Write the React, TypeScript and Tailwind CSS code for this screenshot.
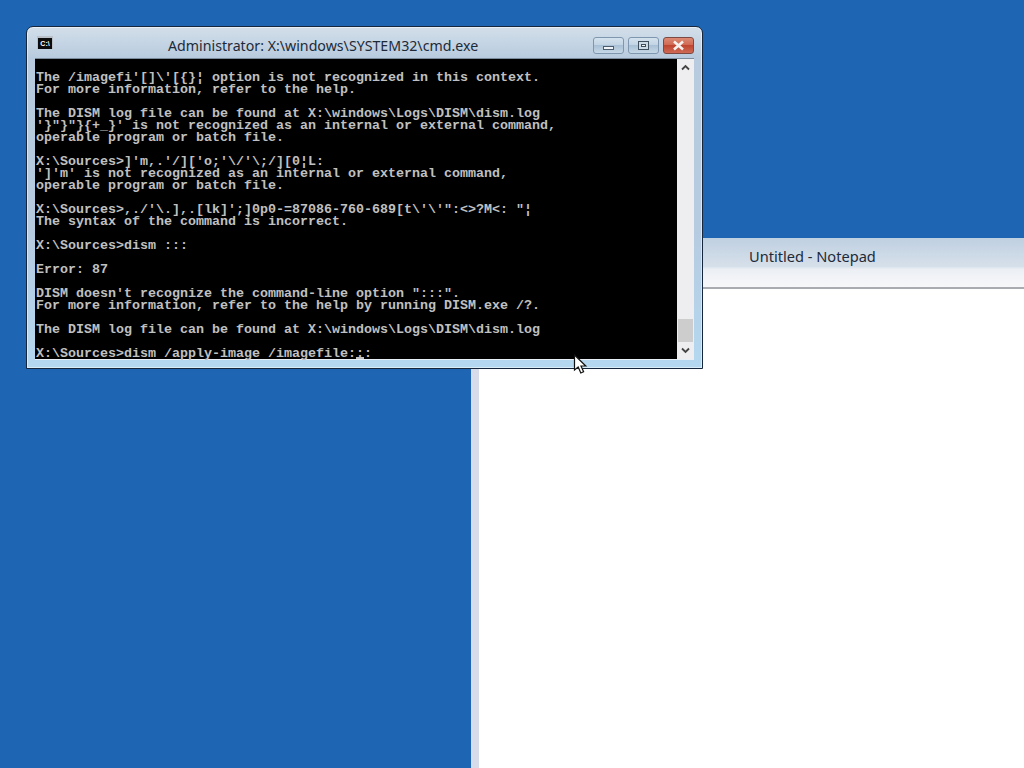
const consoleLines = [
  '',
  "The /imagefi'[]\\'[{}¦ option is not recognized in this context.",
  'For more information, refer to the help.',
  '',
  'The DISM log file can be found at X:\\windows\\Logs\\DISM\\dism.log',
  "'}\"}\"}{+_}' is not recognized as an internal or external command,",
  'operable program or batch file.',
  '',
  "X:\\Sources>]'m,.'/]['o;'\\/'\\;/][0¦L:",
  "']'m' is not recognized as an internal or external command,",
  'operable program or batch file.',
  '',
  "X:\\Sources>,./'\\.],.[lk]';]0p0-=87086-760-689[t\\'\\'\":<>?M<: \"¦",
  'The syntax of the command is incorrect.',
  '',
  'X:\\Sources>dism :::',
  '',
  'Error: 87',
  '',
  "DISM doesn't recognize the command-line option \":::\".",
  'For more information, refer to the help by running DISM.exe /?.',
  '',
  'The DISM log file can be found at X:\\windows\\Logs\\DISM\\dism.log',
  '',
  'X:\\Sources>dism /apply-image /imagefile:::',
]

function CmdIcon() {
  return (
    <div className="w-[16px] h-[13px] bg-[#0c0c0c] border-t-2 border-x border-[#b9c0c8] flex items-center justify-center overflow-hidden">
      <span className="text-[7px] leading-none font-bold text-white font-['Liberation_Sans',sans-serif]">C:\</span>
    </div>
  )
}

function WindowButtons() {
  return (
    <div className="flex gap-[4px]">
      <div className="w-[31px] h-[17px] rounded-[3px] border border-[#7f97ae] bg-[linear-gradient(to_bottom,#d5e2ee,#c3d4e4_45%,#a9c0d6_50%,#c6d8e6)] flex items-end justify-center pb-[3px]">
        <div className="w-[11px] h-[4px] bg-[#f1f5f8] border border-[#4b5d6e]" />
      </div>
      <div className="w-[31px] h-[17px] rounded-[3px] border border-[#7f97ae] bg-[linear-gradient(to_bottom,#d5e2ee,#c3d4e4_45%,#a9c0d6_50%,#c6d8e6)] flex items-center justify-center">
        <div className="w-[11px] h-[9px] border border-[#3f4f5e] bg-[#cddbe7] flex items-center justify-center">
          <div className="w-[5px] h-[3px] bg-[#f1f5f8] border border-[#3f4f5e]" />
        </div>
      </div>
      <div className="w-[31px] h-[17px] rounded-[3px] border border-[#7c4a42] bg-[linear-gradient(to_bottom,#dc8a74,#d06a55_45%,#bf4630_50%,#cf6a55)] flex items-center justify-center">
        <svg width="13" height="11" viewBox="0 0 13 11">
          <path d="M2 1.5 L11 9.5 M11 1.5 L2 9.5" stroke="#f4f1ee" strokeWidth="2.6" />
        </svg>
      </div>
    </div>
  )
}

function Scrollbar() {
  return (
    <div className="w-[17px] bg-[#eeeef0] flex flex-col items-center">
      <div className="h-[17px] flex items-center justify-center">
        <svg width="9" height="7" viewBox="0 0 9 7">
          <path d="M1 5.5 L4.5 2 L8 5.5" fill="none" stroke="#444" strokeWidth="1.8" />
        </svg>
      </div>
      <div className="flex-1 w-full" />
      <div className="w-[15px] h-[23px] bg-[#cdcdcd]" />
      <div className="h-[17px] flex items-center justify-center">
        <svg width="9" height="7" viewBox="0 0 9 7">
          <path d="M1 1.5 L4.5 5 L8 1.5" fill="none" stroke="#444" strokeWidth="1.8" />
        </svg>
      </div>
    </div>
  )
}

function CmdWindow() {
  return (
    <div className="absolute left-[26px] top-[26px] w-[677px] h-[343px] rounded-t-[7px] border border-[#16263c] bg-[linear-gradient(to_bottom,#d3dfea,#b8cbde_9%,#b6cbe0_60%,#b4d8f0)] pl-[8px] pr-[8px] pb-[8px] flex flex-col shadow-[inset_0_0_0_1px_rgba(255,255,255,0.5)]">
      <div className="h-[32px] relative flex items-center shrink-0 border-b border-[#7d8c9b]">
        <div className="ml-[2px]">
          <CmdIcon />
        </div>
        <div className="absolute left-[133px] top-[8px] text-[14.2px] text-[#1d2a38] font-['Noto_Sans',sans-serif] whitespace-nowrap">
          Administrator: X:\windows\SYSTEM32\cmd.exe
        </div>
        <div className="absolute right-[0px] top-[10px]">
          <WindowButtons />
        </div>
      </div>
      <div className="flex h-[300px] shrink-0 shadow-[0_1px_0_0_#e8eff6]">
        <div className="relative w-[642px] bg-black pl-[1px] pt-[1px] font-['Liberation_Mono',monospace] font-bold text-[13.33px] leading-[12px] text-[#c0c0c0] whitespace-pre">
          {consoleLines.map((line, idx) => (
            <div key={idx} className="h-[12px]">{line}</div>
          ))}
          <div className="absolute left-[321px] top-[298px] w-[8px] h-[2px] bg-[#c0c0c0]" />
        </div>
        <Scrollbar />
      </div>
    </div>
  )
}

function NotepadWindow() {
  return (
    <div className="absolute left-[471px] top-[238px] right-0 bottom-0 bg-[#d6dcea] pl-[8px] flex flex-col">
      <div className="h-[51px] ml-[-8px] bg-[linear-gradient(to_bottom,#bfd0e1,#d6e0ea_58%,#ecf0f5_64%,#f6f7f9)] border-b-2 border-[#a8acb0] relative shrink-0">
        <div className="absolute left-[278px] top-[8px] text-[14.6px] text-[#1d2a38] font-['Noto_Sans',sans-serif] whitespace-nowrap">
          Untitled - Notepad
        </div>
      </div>
      <div className="flex-1 bg-white" />
    </div>
  )
}

function MouseCursor() {
  return (
    <svg className="absolute left-[573px] top-[354px]" width="15" height="21" viewBox="0 0 15 21">
      <path d="M1.5 1 L1.5 16 L5.2 13 L7.8 19 L10.6 17.8 L8 12 L12.8 12 Z" fill="#fff" stroke="#111" strokeWidth="1.2" />
    </svg>
  )
}

export default function App() {
  return (
    <div className="relative w-[1024px] h-[768px] bg-[#1e66b4] overflow-hidden">
      <NotepadWindow />
      <CmdWindow />
      <MouseCursor />
    </div>
  )
}
